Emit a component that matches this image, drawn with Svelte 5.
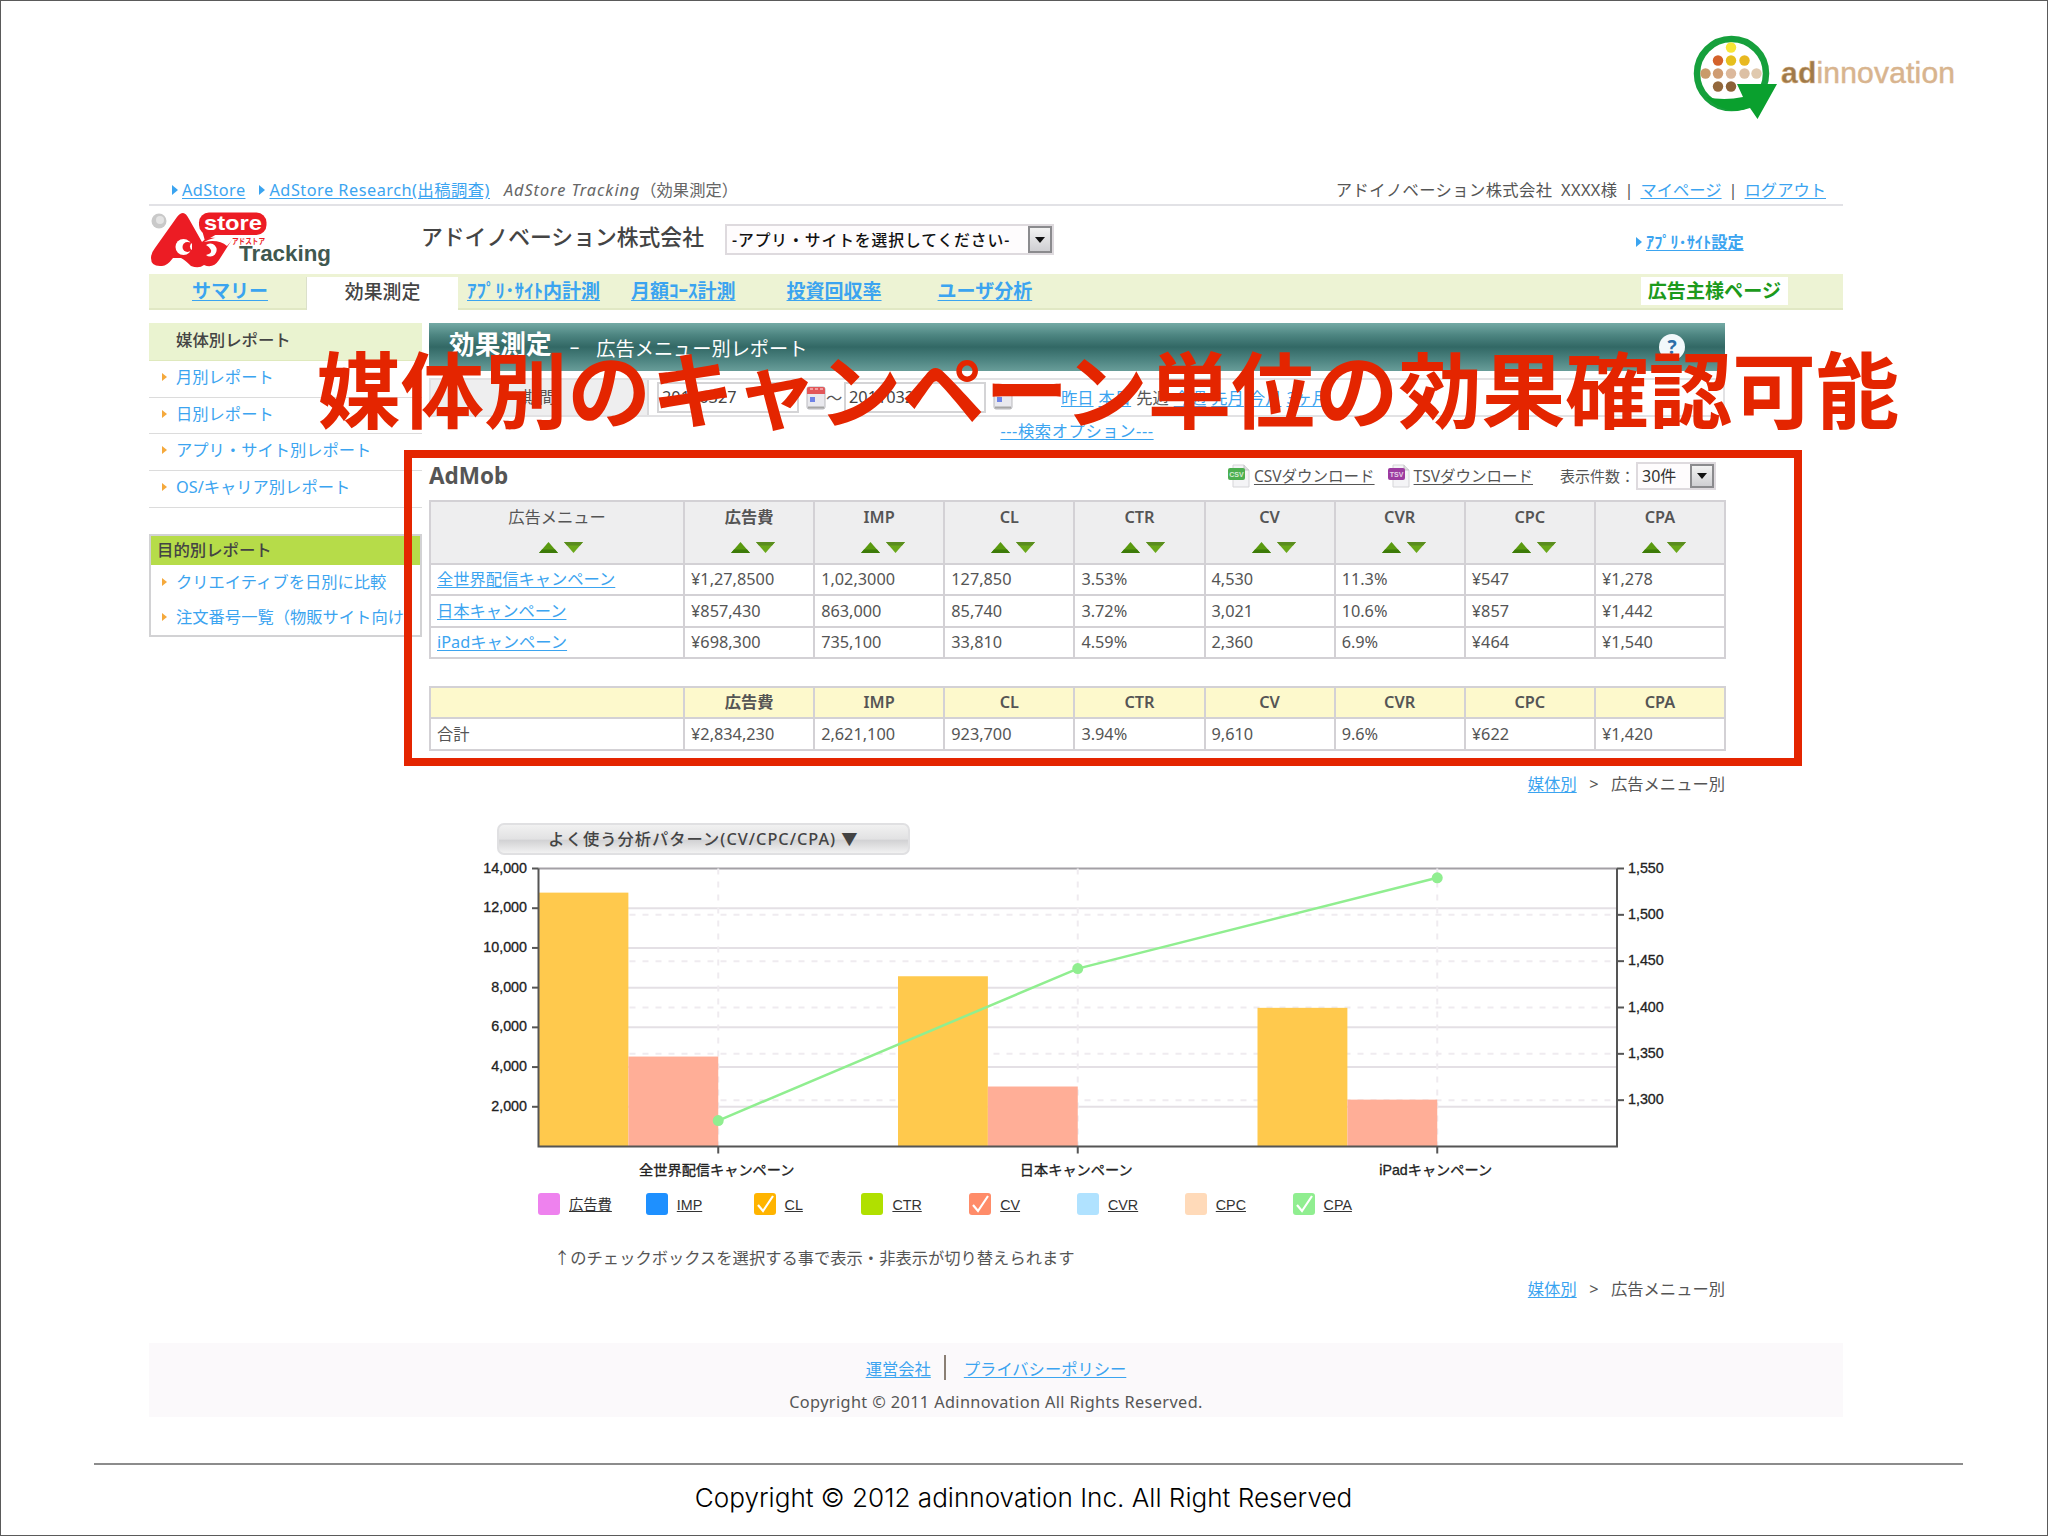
<script>
    const tabs = [
        { title: 'サマリー', left: 43 },
        { title: '効果測定', active: true },
        { title: 'ｱﾌﾟﾘ･ｻｲﾄ内計測', left: 9 },
        { title: '月額ｺｰｽ計測', left: 31 },
        { title: '投資回収率', left: 51 },
        { title: 'ユーザ分析', left: 56 }
    ]

    const mediaReports = ['月別レポート', '日別レポート', 'アプリ・サイト別レポート', 'OS/キャリア別レポート']
    const purposeReports = ['クリエイティブを日別に比較', '注文番号一覧（物販サイト向け']
    const periods = ['昨日', '本日', '先週', '今週', '先月', '今月', '3ヶ月']

    const columns = ['広告費', 'IMP', 'CL', 'CTR', 'CV', 'CVR', 'CPC', 'CPA']
    const campaigns = [
        { name: '全世界配信キャンペーン', cells: ['¥1,27,8500', '1,02,3000', '127,850', '3.53%', '4,530', '11.3%', '¥547', '¥1,278'], cl: 12785, cv: 4530, cpa: 1278 },
        { name: '日本キャンペーン', cells: ['¥857,430', '863,000', '85,740', '3.72%', '3,021', '10.6%', '¥857', '¥1,442'], cl: 8574, cv: 3021, cpa: 1442 },
        { name: 'iPadキャンペーン', cells: ['¥698,300', '735,100', '33,810', '4.59%', '2,360', '6.9%', '¥464', '¥1,540'], cl: 6983, cv: 2360, cpa: 1540 }
    ]
    const totals = ['¥2,834,230', '2,621,100', '923,700', '3.94%', '9,610', '9.6%', '¥622', '¥1,420']

    const legend = [
        { title: '広告費', color: '#ee82ee' },
        { title: 'IMP', color: '#1e90ff' },
        { title: 'CL', color: '#ffb400', checked: true },
        { title: 'CTR', color: '#b0e000' },
        { title: 'CV', color: '#ff8c69', checked: true },
        { title: 'CVR', color: '#b0e2ff' },
        { title: 'CPC', color: '#ffdab9' },
        { title: 'CPA', color: '#90ee90', checked: true }
    ]

    // plot area inside the chart svg
    const plot = { left: 109.5, right: 1188, top: 13.5, bottom: 291.5 }
    const height = plot.bottom - plot.top
    const band = (plot.right - plot.left) / 3
    const bar = band / 4

    const yLeft = (v) => plot.bottom - (v / 14000) * height
    const yRight = (v) => plot.bottom - ((v - 1250) / 300) * height
    const xMid = (i) => plot.left + band * i + bar * 2

    const leftTicks = [14000, 12000, 10000, 8000, 6000, 4000, 2000]
    const rightTicks = [1550, 1500, 1450, 1400, 1350, 1300]
    const format = (v) => v.toLocaleString('en-US')
    const linePoints = campaigns.map((c, i) => `${xMid(i)},${yRight(c.cpa)}`).join(' ')
</script>

{#snippet calendar()}
    <svg class="calendar" width="20" height="24" viewBox="0 0 20 24">
        <rect x="1" y="1" width="18" height="22" rx="2" fill="#e9e9ee" stroke="#b9b9bd" />
        <path d="M1 8V3a2 2 0 0 1 2-2h14a2 2 0 0 1 2 2v5z" fill="#e2575a" />
        <path d="M4 3h3M9 3h3M14 3h3" stroke="#f7b5b5" stroke-width="1.5" />
        <rect x="4" y="11" width="5" height="5" fill="#6f83e6" />
        <path d="M2 21.500h16" stroke="#a5a5a5" stroke-width="2" />
    </svg>
{/snippet}

{#snippet fileIcon(label, color)}
    <svg class="file" width="22" height="24" viewBox="0 0 22 24">
        <path d="M5 1h11l5 5v17H5z" fill="#f4f4f6" stroke="#d5d5d8" />
        <path d="M16 1v5h5" fill="#ddd" stroke="#c4c4c8" />
        <rect x="0" y="4" width="17" height="12" rx="2" fill={color} />
        <text x="8.500" y="13" text-anchor="middle" font-size="7" font-weight="bold" fill="#fff" opacity=".75">{label}</text>
    </svg>
{/snippet}

{#snippet trail()}
    <div class="trail">
        <a href="#media">媒体別</a><span>&gt;</span>広告メニュー別
    </div>
{/snippet}

<div class="slide">
    <header class="brand">
        <svg width="270" height="94" viewBox="0 0 270 94">
            <circle cx="41.500" cy="45.500" r="34.500" fill="#fff" stroke="#16a03c" stroke-width="6.500" />
            <path d="M16 69Q34 73 53 69L47 56H87L67.500 91L60 80Q36 89 16 69Z" fill="#0aa02e" />
            <circle cx="41" cy="19.500" r="5.200" fill="#f8e636" />
            <circle cx="28" cy="32.500" r="5.200" fill="#d4622a" />
            <circle cx="41" cy="32.500" r="5.200" fill="#e6bf1e" />
            <circle cx="54.500" cy="32.500" r="5.200" fill="#e8b820" />
            <circle cx="15.500" cy="45.500" r="5.200" fill="#c99b6a" />
            <circle cx="28" cy="45.500" r="5.200" fill="#cf9c72" />
            <circle cx="41" cy="45.500" r="5.200" fill="#dcb99c" />
            <circle cx="54.500" cy="45.500" r="5.200" fill="#dcc0a4" />
            <circle cx="66.500" cy="45.500" r="5.200" fill="#e0c9ae" />
            <circle cx="28" cy="58.500" r="5.200" fill="#94683c" />
            <circle cx="41" cy="58.500" r="5.200" fill="#8c6238" />
            <text x="91" y="54.500" font-size="30" textLength="174" fill="#d8b48e" stroke="#d8b48e" stroke-width=".5"><tspan font-weight="bold" fill="#a07a48">ad</tspan>innovation</text>
        </svg>
    </header>

    <div class="app">
        <div class="topbar">
            <i class="arrow"></i><a href="#adstore">AdStore</a>
            <i class="arrow second"></i><a class="research" href="#research">AdStore Research(出稿調査)</a>
            <span class="here"><em>AdStore Tracking</em>（効果測定）</span>
            <div class="account">
                <span>アドイノベーション株式会社 XXXX様</span><b>|</b><a href="#mypage">マイページ</a><b>|</b><a href="#logout">ログアウト</a>
            </div>
        </div>

        <div class="masthead">
            <svg class="logo" width="190" height="60" viewBox="0 0 190 60">
                <circle cx="10" cy="11" r="7.500" fill="#c9c9c9" />
                <circle cx="11" cy="10" r="4" fill="#e4e4e4" />
                <path d="M34 3Q37 3 40 9L53 32Q58 27 67 28H84L70 50Q64 59 55 55Q50 59 42 56Q36 50 32 48H24Q18 56 13 56Q2 57 2 48Q2 43 6 38L28 7Q31 3 34 3Z" fill="#ec1c24" />
                <rect x="50" y="2.500" width="67.500" height="22.500" rx="10" fill="#ec1c24" />
                <path d="M53 20L56 31L68 24Z" fill="#ec1c24" />
                <circle cx="34.500" cy="37" r="8" fill="#fff" />
                <circle cx="38.500" cy="37" r="5" fill="#ec1c24" />
                <path d="M43 33a4 4 0 0 0 0 7z" fill="#fff" />
                <path d="M55 32Q68 25 85 28L78 36Q70 29 55 32Z" fill="#fff" />
                <path d="M57 35a6.500 6.500 0 1 1 0 10q6-1 5-5q-1-3-5-5z" fill="#fff" />
                <text x="55" y="20" font-size="21" textLength="58" lengthAdjust="spacingAndGlyphs" font-weight="bold" fill="#fff">store</text>
                <text x="83" y="34" font-size="8" textLength="33" lengthAdjust="spacingAndGlyphs" font-weight="bold" fill="#ec1c24">アドストア</text>
                <text x="90" y="51" font-size="22" textLength="92" lengthAdjust="spacingAndGlyphs" font-weight="bold" fill="#40584f">Tracking</text>
            </svg>
            <h1>アドイノベーション株式会社</h1>
            <div class="select app-select"><span>-アプリ・サイトを選択してください-</span><i></i></div>
            <div class="settings"><i class="arrow"></i><a href="#settings">ｱﾌﾟﾘ･ｻｲﾄ設定</a></div>
        </div>

        <nav>
            {#each tabs as tab}
                {#if tab.active}
                    <span class="active">{tab.title}</span>
                {:else}
                    <a href="#tab" style="margin-left: {tab.left}px">{tab.title}</a>
                {/if}
            {/each}
            <strong>広告主様ページ</strong>
        </nav>

        <div class="columns">
            <aside>
                <h2>媒体別レポート</h2>
                <ul>
                    {#each mediaReports as report}
                        <li>{report}</li>
                    {/each}
                </ul>
                <section>
                    <h3>目的別レポート</h3>
                    <ul>
                        {#each purposeReports as report}
                            <li>{report}</li>
                        {/each}
                    </ul>
                </section>
            </aside>

            <main>
                <div class="title">
                    <h2>効果測定</h2><span class="dash">–</span><span>広告メニュー別レポート</span>
                    <b class="help">?</b>
                </div>

                <div class="filter">
                    <div class="label">期間</div>
                    <div class="input">20110327</div>
                    {@render calendar()}
                    <span class="tilde">～</span>
                    <div class="input">20110327</div>
                    {@render calendar()}
                    <div class="periods">
                        {#each periods as period, key}
                            {#if key == 2}
                                <span>{period}</span>
                            {:else}
                                <a href="#period">{period}</a>
                            {/if}
                        {/each}
                    </div>
                </div>
                <div class="option"><a href="#option">---検索オプション---</a></div>

                <div class="tools">
                    <h3>AdMob</h3>
                    {@render fileIcon('CSV', '#4caf50')}
                    <a href="#csv">CSVダウンロード</a>
                    {@render fileIcon('TSV', '#9c3aa0')}
                    <a href="#tsv">TSVダウンロード</a>
                    <span class="count">表示件数：</span>
                    <div class="select count-select"><span>30件</span><i></i></div>
                </div>

                <table>
                    <thead>
                        <tr>
                            {#each ['広告メニュー', ...columns] as column}
                                <th>
                                    {column}
                                    <svg width="44" height="12" viewBox="0 0 44 12">
                                        <path d="M9.500 0L19 11H0z" fill="#5a9a10" /><path d="M0 11L3 7.500H16L19 11z" fill="#3c7a08" />
                                        <path d="M25 0H44L34.500 11z" fill="#6aa81a" /><path d="M25 0H44L41 3.500H28z" fill="#5a8c1e" />
                                    </svg>
                                </th>
                            {/each}
                        </tr>
                    </thead>
                    <tbody>
                        {#each campaigns as campaign}
                            <tr>
                                <td><a href="#campaign">{campaign.name}</a></td>
                                {#each campaign.cells as cell}
                                    <td>{cell}</td>
                                {/each}
                            </tr>
                        {/each}
                    </tbody>
                </table>

                <table class="total">
                    <thead>
                        <tr>
                            <th></th>
                            {#each columns as column}
                                <th>{column}</th>
                            {/each}
                        </tr>
                    </thead>
                    <tbody>
                        <tr>
                            <td>合計</td>
                            {#each totals as cell}
                                <td>{cell}</td>
                            {/each}
                        </tr>
                    </tbody>
                </table>

                {@render trail()}

                <button class="pattern">よく使う分析パターン(CV/CPC/CPA) <span>▼</span></button>

                <svg class="chart" width="1296" height="330" viewBox="0 0 1296 330">
                    {#each leftTicks as tick}
                        <line x1={plot.left} x2={plot.right} y1={yLeft(tick)} y2={yLeft(tick)} stroke={tick == 14000 ? '#a3a0a5' : '#e4e0e5'} stroke-width="2" />
                    {/each}
                    {#each rightTicks as tick, key}
                        {#if key > 0}
                            <line x1={plot.left} x2={plot.right} y1={yRight(tick)} y2={yRight(tick)} class="dashed" />
                        {/if}
                        <line x1={plot.right} x2="1195" y1={yRight(tick)} y2={yRight(tick)} class="axis" />
                        <text x="1199" y={yRight(tick) + 4}>{format(tick)}</text>
                    {/each}
                    {#each campaigns as campaign, i}
                        <line x1={xMid(i)} x2={xMid(i)} y1={plot.top} y2={plot.bottom} class="dashed" />
                        <rect x={xMid(i) - bar * 2} y={yLeft(campaign.cl)} width={bar} height={plot.bottom - yLeft(campaign.cl)} fill="#ffc94d" />
                        <rect x={xMid(i) - bar} y={yLeft(campaign.cv)} width={bar} height={plot.bottom - yLeft(campaign.cv)} fill="#ffae97" />
                        <line x1={xMid(i)} x2={xMid(i)} y1={plot.bottom} y2={plot.bottom + 7} class="axis" />
                        <text x={xMid(i) - 1.5} y={plot.bottom + 28} text-anchor="middle" class="name">{campaign.name}</text>
                    {/each}
                    <path d="M{plot.left} {plot.top}V{plot.bottom}H{plot.right}V{plot.top}" class="axis" fill="none" />
                    {#each leftTicks as tick}
                        <line x1="103" x2={plot.left} y1={yLeft(tick)} y2={yLeft(tick)} class="axis" />
                        <text x="98" y={yLeft(tick) + 4} text-anchor="end">{format(tick)}</text>
                    {/each}
                    <polyline points={linePoints} fill="none" stroke="#90ee90" stroke-width="2.500" />
                    {#each campaigns as campaign, i}
                        <circle cx={xMid(i)} cy={yRight(campaign.cpa)} r="5.500" fill="#90ee90" />
                    {/each}
                </svg>

                <div class="legend">
                    {#each legend as item}
                        <div>
                            <i style="background: {item.color}">
                                {#if item.checked}
                                    <svg width="22" height="22" viewBox="0 0 22 22"><path d="M4 12L9 18L19 3" fill="none" stroke="#fff" stroke-width="2.200" /></svg>
                                {/if}
                            </i>
                            <u>{item.title}</u>
                        </div>
                    {/each}
                </div>
                <p class="hint">↑のチェックボックスを選択する事で表示・非表示が切り替えられます</p>

                {@render trail()}
            </main>
        </div>

        <footer>
            <div><a href="#company">運営会社</a><i></i><a href="#privacy">プライバシーポリシー</a></div>
            <p>Copyright © 2011 Adinnovation All Rights Reserved.</p>
        </footer>
    </div>

    <div class="copyright">Copyright © 2012 adinnovation Inc. All Right Reserved</div>

    <div class="headline">媒体別のキャンペーン単位の効果確認可能</div>
    <div class="frame"></div>
</div>

<style>
    :global(body) {
        margin: 0;
        background: #fff;
    }

    * {
        box-sizing: border-box;
    }

    .slide {
        position: relative;
        width: 2048px;
        height: 1536px;
        overflow: hidden;
        border: 1px solid #5a5a5a;
        background: #fff;
        color: #555;
        font: 16.3px/20px "Noto Sans", "Noto Sans CJK JP", sans-serif;
        white-space: nowrap;
    }

    h1, h2, h3, p, ul {
        margin: 0;
        padding: 0;
        list-style: none;
        font-weight: normal;
    }

    a {
        color: #3ba4f0;
        text-underline-offset: 2px;
    }

    svg text {
        font-family: "Liberation Sans", "Noto Sans CJK JP", sans-serif;
    }

    .brand {
        display: flex;
        justify-content: flex-end;
        height: 171px;
        padding: 27px 87px 0 0;
    }

    .app {
        width: 1694px;
        margin-left: 148px;
    }

    .topbar {
        display: flex;
        align-items: center;
        height: 34px;
        padding: 4px 17px 0 23px;
        border-bottom: 2px solid #e2e2e6;
    }
    .topbar > a { letter-spacing: .4px; }
    .topbar > .research { letter-spacing: .5px; }

    .arrow {
        width: 0;
        border: 5px solid transparent;
        border-left: 6px solid #3ba4f0;
        border-right: 0;
        margin-right: 4px;
    }
    .arrow.second { margin-left: 14px; }
    .here { margin-left: 14px; color: #666; }
    .here em { letter-spacing: .95px; }
    .account { margin-left: auto; }
    .account span {
        letter-spacing: .4px;
        word-spacing: 4px;
    }
    .account b {
        display: inline-block;
        width: 23px;
        text-align: center;
        font-weight: normal;
    }

    .masthead {
        display: flex;
        height: 68px;
    }
    .logo { margin-top: 4px; }
    h1 {
        width: 284px;
        margin: 16px 0 0 82px;
        font-size: 21.8px;
        font-weight: 500;
        line-height: 30px;
        color: #444;
    }

    .select {
        display: flex;
        align-items: center;
        justify-content: space-between;
        border: 2px solid #dedade;
        color: #333;
        background: #fefcfd;
    }
    .select i {
        display: flex;
        align-items: center;
        justify-content: center;
        align-self: stretch;
        width: 24px;
        border: 2px solid #8b8b8e;
        background: linear-gradient(#f2f2f2, #cfcfd2);
    }
    .select i::after {
        content: '';
        border: 5px solid transparent;
        border-top: 6px solid #111;
        border-bottom: 0;
    }
    .app-select {
        width: 329px;
        height: 31px;
        margin: 18px 0 0 20px;
        padding-left: 5px;
        font-size: 15.8px;
        font-weight: 500;
        letter-spacing: .9px;
        color: #111;
    }
    .settings {
        display: flex;
        align-items: center;
        height: 20px;
        margin: 26px 0 0 582px;
        font-weight: bold;
    }

    nav {
        display: flex;
        align-items: center;
        height: 36px;
        border-bottom: 2px solid #e1e8c4;
        background: #edf3d4;
        font-size: 19px;
    }
    nav a { font-weight: bold; }
    nav .active {
        align-self: flex-end;
        width: 152px;
        height: 33px;
        margin: 0 0 -2px 38px;
        border-left: 1px solid #dbe0cb;
        background: #fff;
        line-height: 31px;
        text-align: center;
        color: #444;
        font-size: 18.9px;
        font-weight: 500;
    }
    nav strong {
        margin: 0 55px 0 auto;
        padding: 0 7px;
        background: #fff;
        line-height: 28px;
        font-size: 19.1px;
        color: #1c9a1c;
    }

    .columns {
        display: flex;
        gap: 7px;
        height: 1033px;
        padding-top: 13px;
    }

    aside {
        width: 273px;
    }
    aside h2 {
        height: 38px;
        padding-left: 27px;
        border-bottom: 1px solid #dfe9bd;
        background: #eaf3d0;
        font-size: 16.4px;
        font-weight: 500;
        line-height: 34px;
        color: #444;
    }
    aside li {
        display: flex;
        align-items: center;
        height: 36.700px;
        padding: 0 0 4px 13px;
        border-bottom: 1px solid #dcdcdc;
        color: #3ba4f0;
    }
    aside li::before {
        content: '';
        border: 4px solid transparent;
        border-left: 5px solid #f5a93c;
        border-right: 0;
        margin-right: 9px;
    }
    aside section {
        height: 103px;
        margin-top: 26px;
        border: 2px solid #d2d2d4;
        overflow: hidden;
    }
    aside h3 {
        height: 29px;
        padding-left: 6px;
        background: #b6dc49;
        font-size: 16.4px;
        font-weight: 500;
        line-height: 28px;
        color: #444;
    }
    aside section li {
        height: 35.500px;
        padding: 0 0 2px 11px;
        border: 0;
    }

    main {
        width: 1296px;
    }

    .title {
        display: flex;
        align-items: center;
        height: 48px;
        padding: 0 40px 0 20px;
        background: linear-gradient(#74aaa5, #4d8581 25%, #326865 50%, #4b827f 75%, #689d99);
        color: #fff;
        font-size: 19.2px;
    }
    .title h2 {
        margin-top: -4px;
        font-size: 25.700px;
        font-weight: bold;
    }
    .title span { margin-top: 3px; }
    .title .dash { margin: 0 17px 0 18px; }
    .help {
        width: 26px;
        height: 26px;
        margin-left: auto;
        border-radius: 50%;
        background: #f2f8fb;
        line-height: 26px;
        text-align: center;
        color: #2c6ea8;
    }

    .filter {
        display: flex;
        align-items: center;
        height: 39px;
        margin-top: 7px;
        border: 2px solid #e2e2e4;
    }
    .filter .label {
        align-self: stretch;
        width: 218px;
        margin-right: 8px;
        border-right: 2px solid #d9d9db;
        background: #eeeeef;
        line-height: 34px;
        text-align: center;
    }
    .filter .input {
        width: 142px;
        height: 31px;
        padding-left: 3px;
        border: 2px solid #d4d4d6;
        line-height: 27px;
        color: #444;
    }
    .calendar { margin-left: 7px; }
    .tilde { width: 18px; }
    .periods {
        display: flex;
        gap: 5px;
        margin-left: 48px;
    }

    .option {
        padding: 4px 0 7px;
        text-align: center;
    }
    .option a { letter-spacing: .6px; }

    .tools {
        display: flex;
        align-items: center;
        height: 52px;
        padding: 3px 9px 0 0;
        font-size: 15.5px;
    }
    .tools h3 {
        margin-right: auto;
        font-size: 22.500px;
        font-weight: bold;
    }
    .tools a {
        margin-left: 4px;
        color: #555;
    }
    .tools a + .file { margin-left: 13px; }
    .count { width: 76px; margin-left: 27px; font-size: 15px; }
    .count-select {
        width: 80px;
        height: 28px;
        padding-left: 4px;
        font-size: 16px;
    }

    table {
        width: 1297px;
        table-layout: fixed;
        border-collapse: collapse;
    }
    th, td {
        height: 31.500px;
        padding: 0 0 0 6px;
        border: 2px solid #d3d1d5;
        text-align: left;
    }
    th:first-child { width: 254px; }
    th {
        height: 62.500px;
        padding: 0 0 4px;
        background: #eeeeef;
        text-align: center;
        font-weight: 600;
    }
    th:first-child { font-weight: normal; }
    th svg {
        display: block;
        margin: 15px auto 0;
        position: relative;
        left: 4px;
    }
    .total { margin-top: 27px; }
    .total th {
        height: 31px;
        padding: 0 0 1px;
        background: #fdf9cc;
    }

    .trail {
        height: 72px;
        line-height: 67px;
        text-align: right;
    }
    .trail span { margin: 0 12.5px; }

    .pattern {
        display: block;
        width: 413px;
        height: 32px;
        margin-left: 68px;
        padding: 0;
        border: 2px solid #e0e0e2;
        border-radius: 7px;
        background: linear-gradient(#f1f1f1, #e2e2e3 50%, #d2d2d4 55%, #f2f2f2);
        font: 500 16.3px/24px "Noto Sans", "Noto Sans CJK JP", sans-serif;
        letter-spacing: 1px;
        color: #444;
    }

    .chart { display: block; }
    .chart text {
        font-size: 14.3px;
        fill: #222;
        stroke: #222;
        stroke-width: .3;
    }
    .chart .name { font-size: 14.2px; }
    .axis {
        stroke: #555;
        stroke-width: 2;
    }
    .dashed {
        stroke: #efebf0;
        stroke-width: 2;
        stroke-dasharray: 6 7;
    }

    .legend {
        display: flex;
        height: 22px;
        margin: 8px 0 0 109px;
        font: 14.3px/24px "Liberation Sans", "Noto Sans CJK JP", sans-serif;
        color: #333;
    }
    .legend div {
        display: flex;
        width: 107.800px;
    }
    .legend i {
        width: 22px;
        height: 22px;
        margin-right: 9px;
        border-radius: 3px;
    }
    .legend svg { display: block; }

    .hint {
        margin: 33px 0 0 125px;
    }
    .hint + .trail {
        height: 44px;
        line-height: 43px;
    }

    footer {
        height: 74px;
        padding-top: 14px;
        background: #fbf9fb;
        text-align: center;
    }
    footer div {
        display: flex;
        justify-content: center;
        align-items: center;
    }
    footer i {
        width: 2px;
        height: 25px;
        margin: -2px 18px 0 13px;
        background: #8a7f74;
    }
    footer p {
        margin-top: 12px;
        font-size: 16.3px;
        letter-spacing: .38px;
    }

    .copyright {
        margin: 46px 84px 0 93px;
        padding: 18px 10px 0 0;
        border-top: 2px solid #8c8c8c;
        color: #000;
        font: 300 26.1px/30px "Inter", sans-serif;
        text-align: center;
    }

    .headline {
        position: absolute;
        top: 339px;
        left: 316px;
        font-size: 83.500px;
        line-height: 100px;
        font-weight: bold;
        color: #e42500;
    }

    .frame {
        position: absolute;
        top: 449px;
        left: 403px;
        width: 1398px;
        height: 316px;
        border: 8px solid #e42500;
    }
</style>
